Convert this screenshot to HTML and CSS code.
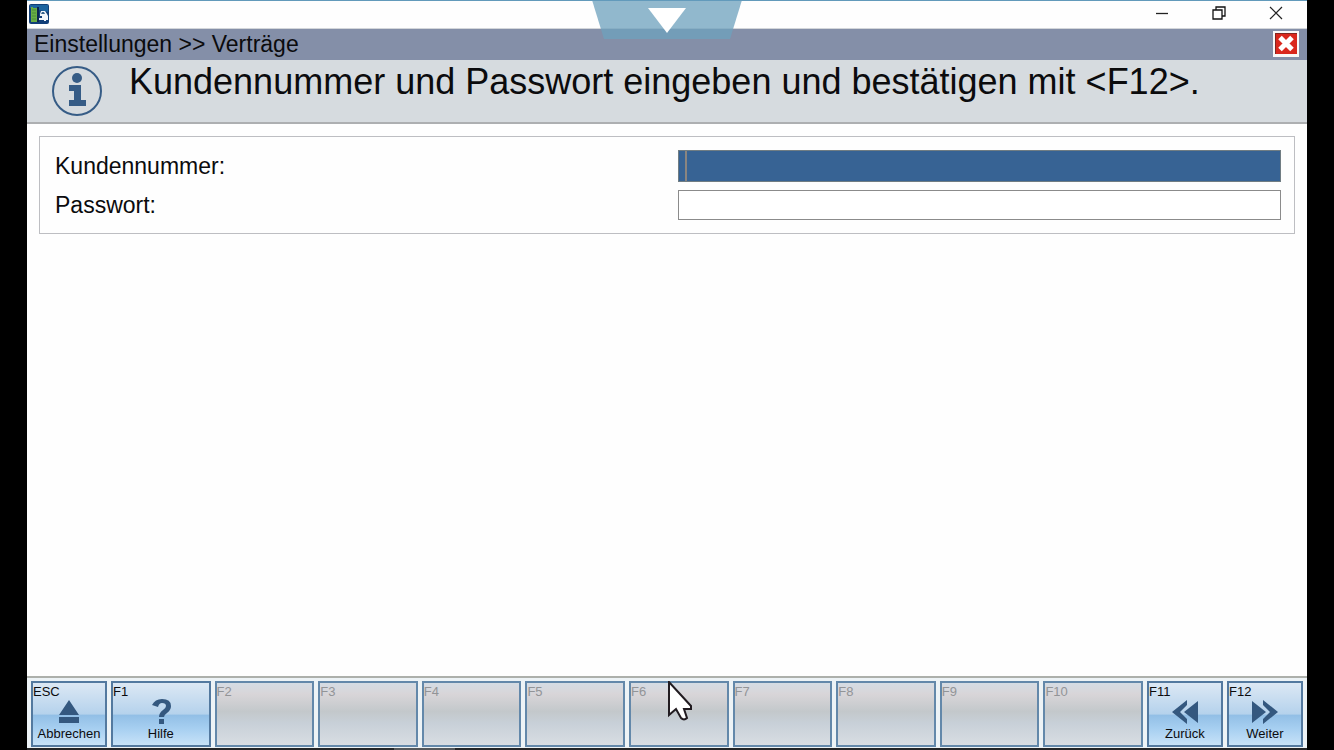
FILE: index.html
```html
<!DOCTYPE html>
<html lang="de">
<head>
<meta charset="utf-8">
<title>Einstellungen - Verträge</title>
<link rel="stylesheet" href="styles.css">
</head>
<body>
<div class="window">
  <header class="titlebar">
    <svg class="app-icon" viewBox="0 0 20 20" aria-hidden="true">
      <rect width="20" height="20" rx="2" fill="#123f78"/>
      <path d="M1 1h18v7L1 4z" fill="#1c64a0"/>
      <path d="M2 3h2v1h4v14H2z" fill="#69ad45"/>
      <path d="M3 6h4M3 9h4M3 12h4M3 15h4" stroke="#4a8c3b"/>
      <path d="M9 3v15" stroke="#0b2550" stroke-width="2"/>
      <path d="M11 10l1-3h4l2 3 1 2v4h-2v1h-2v-1h-5v-2h3v-2h-2z" fill="#f3f7fb"/>
      <path d="M13 8h2l1 2h-4z" fill="#39658f"/>
    </svg>
    <div class="window-controls">
      <button class="control" aria-label="Minimieren"><svg width="14" height="14" viewBox="0 0 14 14"><path d="M1 7.5h12" stroke="#222" stroke-width="1.3"/></svg></button>
      <button class="control" aria-label="Verkleinern"><svg width="14" height="14" viewBox="0 0 14 14" fill="none" stroke="#111" stroke-width="1.3"><path d="M1 4h9v9H1zM4 4V1h9v9h-3"/></svg></button>
      <button class="control" aria-label="Fenster schließen"><svg width="14" height="14" viewBox="0 0 14 14"><path d="M1 1l12 12M13 1L1 13" stroke="#222" stroke-width="1.2"/></svg></button>
    </div>
    <button class="pulldown" aria-label="Menü einblenden">
      <svg viewBox="0 0 150 39"><path d="M0 0h150l-12 39H12z" fill="#6fa2bd" fill-opacity=".76"/><path d="M0 .5h150" stroke="#629abb"/><path d="M56 8h38L75 33z" fill="#fff"/></svg>
    </button>
  </header>
  <nav class="breadcrumb">
    <span>Einstellungen &gt;&gt; Verträge</span>
    <button class="close" aria-label="Schließen">
      <svg viewBox="0 0 26 26"><path d="M0 0h26v26H0z" fill="#f8f8f8"/><path d="M2 2h22v21H2z" fill="#d9271d"/><path d="M2.500 23V2.500H24" fill="none" stroke="#81251f"/><path d="M7 6.500l12 12M19 6.500l-12 12" stroke="#fff" stroke-width="5"/></svg>
    </button>
  </nav>
  <section class="message">
    <svg class="info" viewBox="0 0 50 50" aria-hidden="true"><circle cx="25" cy="25" r="24" fill="none" stroke="#365c86" stroke-width="2"/><circle cx="25" cy="12" r="5" fill="#365c86"/><path d="M17 19h12v15h5v6H17v-6h5v-9h-5z" fill="#365c86"/></svg>
    <h1>Kundennummer und Passwort eingeben und bestätigen mit &lt;F12&gt;.</h1>
  </section>
  <main class="content">
    <form class="panel">
      <label for="customer">Kundennummer:</label>
      <div class="field"><input class="input active" id="customer" type="text"><span class="caret"></span></div>
      <label for="password">Passwort:</label>
      <div class="field"><input class="input" id="password" type="password"></div>
    </form>
  </main>
  <footer class="keys">
    <button class="key"><span class="code">ESC</span><svg class="glyph" viewBox="0 0 28 24"><path d="M14 0l10 15H4zM4 17h20v6H4z"/></svg><span class="caption">Abbrechen</span></button>
    <button class="key"><span class="code">F1</span><svg class="glyph" viewBox="0 0 28 24"><path d="M5 5Q8-1 15-1q9 0 9 7 0 4-4 7-3 2-3 4h-5q0-4 4-7 3-2 3-4 0-3-4-3-3 0-4 4zM12 19h5v5h-5z"/></svg><span class="caption">Hilfe</span></button>
    <button class="key" disabled><span class="code">F2</span></button>
    <button class="key" disabled><span class="code">F3</span></button>
    <button class="key" disabled><span class="code">F4</span></button>
    <button class="key" disabled><span class="code">F5</span></button>
    <button class="key" disabled><span class="code">F6</span></button>
    <button class="key" disabled><span class="code">F7</span></button>
    <button class="key" disabled><span class="code">F8</span></button>
    <button class="key" disabled><span class="code">F9</span></button>
    <button class="key" disabled><span class="code">F10</span></button>
    <button class="key"><span class="code">F11</span><svg class="glyph" viewBox="0 0 28 24"><path d="M27 1v22L13 12zM16 0v5l-7 7 7 7v5L1 12z"/></svg><span class="caption">Zurück</span></button>
    <button class="key"><span class="code">F12</span><svg class="glyph" viewBox="0 0 28 24"><path d="M1 1v22l14-11zM12 0v5l7 7-7 7v5l15-12z"/></svg><span class="caption">Weiter</span></button>
  </footer>
  <div class="edge"></div>
</div>
<svg class="cursor" viewBox="0 0 25 40" aria-hidden="true"><path d="M1 1v33l7-6 5 9q3 3 6 0l-3-9h7v-3z" fill="#fff" stroke="#211b20" stroke-width="2"/></svg>
</body>
</html>
```
FILE: styles.css
```css
* {
  box-sizing: border-box;
}

body {
  margin: 0;
  padding: 0 27px;
  background: #000;
  color: #0b0b0d;
  font-family: "Liberation Sans", Arial, sans-serif;
}

button {
  margin: 0;
  padding: 0;
  border: 0;
  background: none;
  color: inherit;
  font: inherit;
}

svg {
  display: block;
}

.window {
  display: flex;
  flex-direction: column;
  min-height: 100vh;
  background: #fefefe;
}

.titlebar {
  position: relative;
  display: flex;
  justify-content: space-between;
  align-items: center;
  height: 29px;
  padding: 0 24px 2px 2px;
  border-top: 1px solid #629abb;
  border-bottom: 1px solid #d3d6da;
}

.app-icon {
  width: 20px;
  height: 20px;
}

.window-controls {
  display: flex;
  gap: 43px;
  padding-bottom: 2px;
}

.pulldown {
  position: absolute;
  top: -1px;
  left: 50%;
  width: 150px;
  margin-left: -75px;
}

.breadcrumb {
  display: flex;
  justify-content: space-between;
  align-items: flex-start;
  height: 31px;
  padding: 2px 8px 0 7px;
  background: #848fa8;
  font-size: 23px;
  line-height: 26px;
}

.close {
  width: 26px;
  height: 26px;
}

.message {
  display: flex;
  align-items: flex-start;
  gap: 27px;
  height: 64px;
  padding: 0 25px;
  border-bottom: 2px solid #adafb1;
  background: #d6dbdf;
}

.info {
  flex: none;
  width: 50px;
  height: 50px;
  margin-top: 6px;
}

h1 {
  margin: 0;
  font-size: 36px;
  font-weight: 400;
  line-height: 44px;
  white-space: nowrap;
}

.content {
  flex: 1;
  padding: 12px;
}

.panel {
  display: grid;
  grid-template-columns: 623fr 603fr;
  row-gap: 8px;
  align-items: center;
  padding: 13px 13px 13px 15px;
  border: 1px solid #bdbec2;
  font-size: 23px;
  line-height: 30px;
}

.field {
  position: relative;
}

.input {
  display: block;
  width: 100%;
  height: 30px;
  padding: 0 6px;
  border: 1px solid #8b8b8b;
  border-radius: 0;
  outline: 0;
  background: #fff;
  font: inherit;
}

.active {
  height: 32px;
  border-color: #707d83;
  background: #376394;
  color: #fff;
}

.caret {
  position: absolute;
  top: 1px;
  bottom: 1px;
  left: 7px;
  width: 2px;
  background: #8a8580;
}

.keys {
  display: grid;
  grid-template-columns: 76px repeat(10, minmax(0, 1fr)) 76px 76px;
  gap: 4px;
  padding: 3px 4px 1px;
  border-top: 2px solid #adb0ab;
  background: #edf3f6;
}

.key {
  display: flex;
  flex-direction: column;
  align-items: center;
  height: 66px;
  padding: 1px 0;
  border: 2px solid #53799f;
  background: linear-gradient(#dce8f4, #b5d2ec 50%, #92bfe6 52%, #a5cef0 72%, #c7e2f8);
  font-size: 13px;
}

.key:disabled {
  border-color: #6388aa;
  background: linear-gradient(#d5dce4, #d8d5d8 18%, #c3c8cb 46%, #c8d0d8 65%, #d8dde3);
  color: #929497;
}

.code {
  align-self: stretch;
  font-size: 13px;
  line-height: 16px;
  text-align: left;
}

.glyph {
  width: 28px;
  height: 24px;
  fill: #34587f;
  overflow: visible;
}

.caption {
  line-height: 20px;
}

.edge {
  height: 2px;
  background: linear-gradient(90deg, #242527 367px, #55585b 367px 428px, #242527 428px);
}

.cursor {
  position: absolute;
  top: 681px;
  left: 668px;
  width: 25px;
  height: 40px;
}
```
